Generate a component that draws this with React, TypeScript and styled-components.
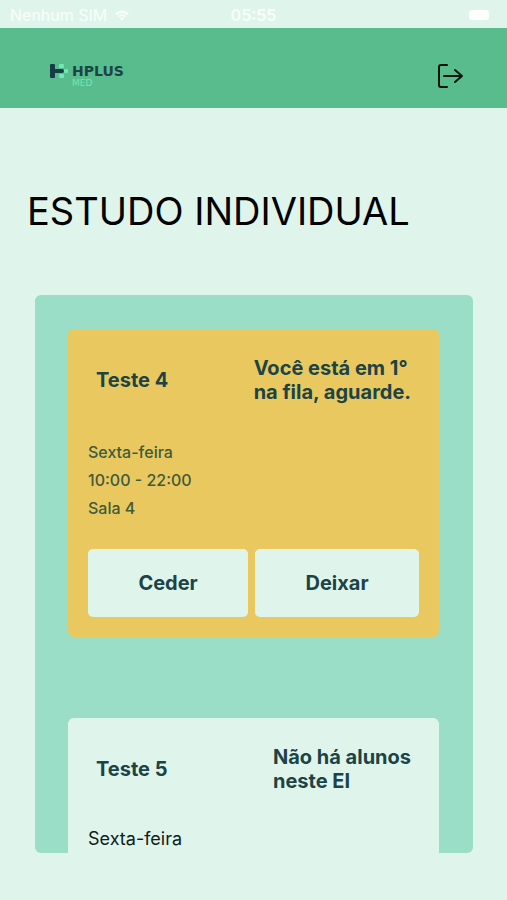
import React from 'react';
import styled, { createGlobalStyle } from 'styled-components';

const colors = {
  mint: '#dff5eb',
  green: '#58bc8d',
  panel: '#9bdec7',
  yellow: '#e9c95f',
  ink: '#1c4346',
  olive: '#405a3c',
  logoMint: '#6fe8b4',
};

const GlobalStyle = createGlobalStyle`
  * { box-sizing: border-box; }
  body {
    margin: 0;
    background: ${colors.mint};
    font-family: Inter, "Liberation Sans", sans-serif;
  }
`;

const Screen = styled.div`
  display: flex;
  flex-direction: column;
  height: 100vh;
  color: #000;
`;

const StatusBar = styled.div`
  flex: none;
  display: grid;
  grid-template-columns: 1fr auto 1fr;
  align-items: center;
  height: 28px;
  padding: 2px 10px 0;
  color: #f8fefb;
  font-size: 16px;
  line-height: 24px;
`;

const Carrier = styled.span`
  display: flex;
  align-items: center;
  gap: 8px;
`;

const Clock = styled.span`
  font-weight: 600;
`;

const Battery = styled.span`
  justify-self: end;
  width: 20px;
  height: 10px;
  margin-right: 8px;
  border-radius: 3px;
  background: #fff;
`;

const Header = styled.header`
  flex: none;
  display: flex;
  align-items: center;
  justify-content: space-between;
  height: 80px;
  padding: 16px 43px 0 50px;
  background: ${colors.green};
`;

const Logo = styled.a`
  display: flex;
  align-items: flex-start;
  gap: 4px;
  text-decoration: none;
`;

const Wordmark = styled.span`
  display: flex;
  flex-direction: column;
  color: ${colors.ink};
  font-family: "DejaVu Sans", sans-serif;
  font-size: 14px;
  font-weight: 700;
  line-height: 14px;
`;

const LogoSub = styled.span`
  color: ${colors.logoMint};
  font-size: 9px;
  font-weight: 400;
  line-height: 10px;
`;

const LogoutButton = styled.button`
  display: flex;
  padding: 0;
  border: 0;
  background: none;
  color: #06140d;
  cursor: pointer;
`;

const Main = styled.main`
  flex: 1;
  display: flex;
  flex-direction: column;
  min-height: 0;
  padding: 79px 34px 47px 35px;
`;

const Title = styled.h1`
  margin: 0 0 60px -8px;
  font-size: 38px;
  font-weight: 400;
  line-height: 48px;
  white-space: nowrap;
`;

const Panel = styled.section`
  flex: 1;
  display: flex;
  flex-direction: column;
  gap: 81px;
  min-height: 0;
  padding: 34px 34px 34px 33px;
  overflow-y: auto;
  scrollbar-width: none;
  border-radius: 6px;
  background: ${colors.panel};
`;

const Card = styled.article<{ $queued?: boolean }>`
  flex: none;
  min-height: 308px;
  padding: 27px 20px 20px;
  border-radius: 6px;
  background: ${(p) => (p.$queued ? colors.yellow : colors.mint)};
`;

const CardHeader = styled.div`
  display: flex;
  align-items: center;
  justify-content: space-between;
  padding: 0 8px;
  color: ${colors.ink};
  font-size: 20px;
  font-weight: 700;
  line-height: 24px;
`;

const CardTitle = styled.h2`
  margin: 0;
  font: inherit;
`;

const Status = styled.p`
  margin: 0;
`;

const StatusLine = styled.span`
  display: block;
`;

const Details = styled.div<{ $queued?: boolean }>`
  margin: 34px 0 27px;
  color: ${(p) => (p.$queued ? colors.olive : '#10201a')};
  font-size: ${(p) => (p.$queued ? 16 : 18)}px;
  font-weight: ${(p) => (p.$queued ? 500 : 400)};
  line-height: ${(p) => (p.$queued ? 28 : 24)}px;
`;

const Detail = styled.p`
  margin: 0;
`;

const Actions = styled.div`
  display: flex;
  gap: 7px;
`;

const ActionButton = styled.button`
  flex: 1 1 auto;
  height: 68px;
  padding: 0;
  border: 0;
  border-radius: 5px;
  background: ${colors.mint};
  color: ${colors.ink};
  font-family: inherit;
  font-size: 20px;
  font-weight: 700;
  cursor: pointer;
`;

type Session = {
  name: string;
  status: string[];
  details: string[];
  queued?: boolean;
  actions: string[];
};

const sessions: Session[] = [
  {
    name: 'Teste 4',
    status: ['Você está em 1°', 'na fila, aguarde.'],
    details: ['Sexta-feira', '10:00 - 22:00', 'Sala 4'],
    queued: true,
    actions: ['Ceder', 'Deixar'],
  },
  {
    name: 'Teste 5',
    status: ['Não há alunos', 'neste EI'],
    details: ['Sexta-feira'],
    actions: [],
  },
];

function WifiIcon() {
  return (
    <svg width="14" height="11" viewBox="0 0 14 11" fill="none" stroke="currentColor" aria-hidden="true">
      <path d="M1 4.2C4.5 1 9.5 1 13 4.2" strokeWidth="2.6" />
      <path d="M3.6 6.8C5.6 5 8.4 5 10.4 6.8" strokeWidth="2" />
      <path d="M4.8 8.4C6.2 7.2 7.8 7.2 9.2 8.4L7 10.8Z" fill="currentColor" stroke="none" />
    </svg>
  );
}

function LogoMark() {
  return (
    <svg width="18" height="14" viewBox="0 0 18 14" aria-hidden="true">
      <rect x="9" y="0" width="5" height="4" rx="1" fill={colors.logoMint} />
      <rect x="9" y="10" width="5" height="4" rx="1" fill={colors.logoMint} />
      <rect x="14" y="5" width="4" height="4" rx="1" fill={colors.logoMint} />
      <path d="M0 1Q0 0 1 0H4Q5 0 5 1V5H12Q14 5 14 7Q14 9 12 9H5V13Q5 14 4 14H1Q0 14 0 13Z" fill="#163c46" />
    </svg>
  );
}

function LogoutIcon() {
  return (
    <svg
      width="27"
      height="26"
      viewBox="0 0 27 26"
      fill="none"
      stroke="currentColor"
      strokeWidth="2"
      strokeLinecap="round"
      strokeLinejoin="round"
      aria-hidden="true"
    >
      <path d="M10 2H4Q2 2 2 4V22Q2 24 4 24H10" />
      <path d="M7 13H25M18 7L25 13L18 19" />
    </svg>
  );
}

export default function App() {
  return (
    <Screen>
      <GlobalStyle />
      <StatusBar>
        <Carrier>
          Nenhum SIM
          <WifiIcon />
        </Carrier>
        <Clock>05:55</Clock>
        <Battery />
      </StatusBar>
      <Header>
        <Logo href="#">
          <LogoMark />
          <Wordmark>
            HPLUS
            <LogoSub>MED</LogoSub>
          </Wordmark>
        </Logo>
        <LogoutButton type="button" aria-label="Sair">
          <LogoutIcon />
        </LogoutButton>
      </Header>
      <Main>
        <Title>ESTUDO INDIVIDUAL</Title>
        <Panel>
          {sessions.map((s) => (
            <Card key={s.name} $queued={s.queued}>
              <CardHeader>
                <CardTitle>{s.name}</CardTitle>
                <Status>
                  {s.status.map((line) => (
                    <StatusLine key={line}>{line}</StatusLine>
                  ))}
                </Status>
              </CardHeader>
              <Details $queued={s.queued}>
                {s.details.map((d) => (
                  <Detail key={d}>{d}</Detail>
                ))}
              </Details>
              {s.actions.length > 0 && (
                <Actions>
                  {s.actions.map((a) => (
                    <ActionButton key={a} type="button">
                      {a}
                    </ActionButton>
                  ))}
                </Actions>
              )}
            </Card>
          ))}
        </Panel>
      </Main>
    </Screen>
  );
}
